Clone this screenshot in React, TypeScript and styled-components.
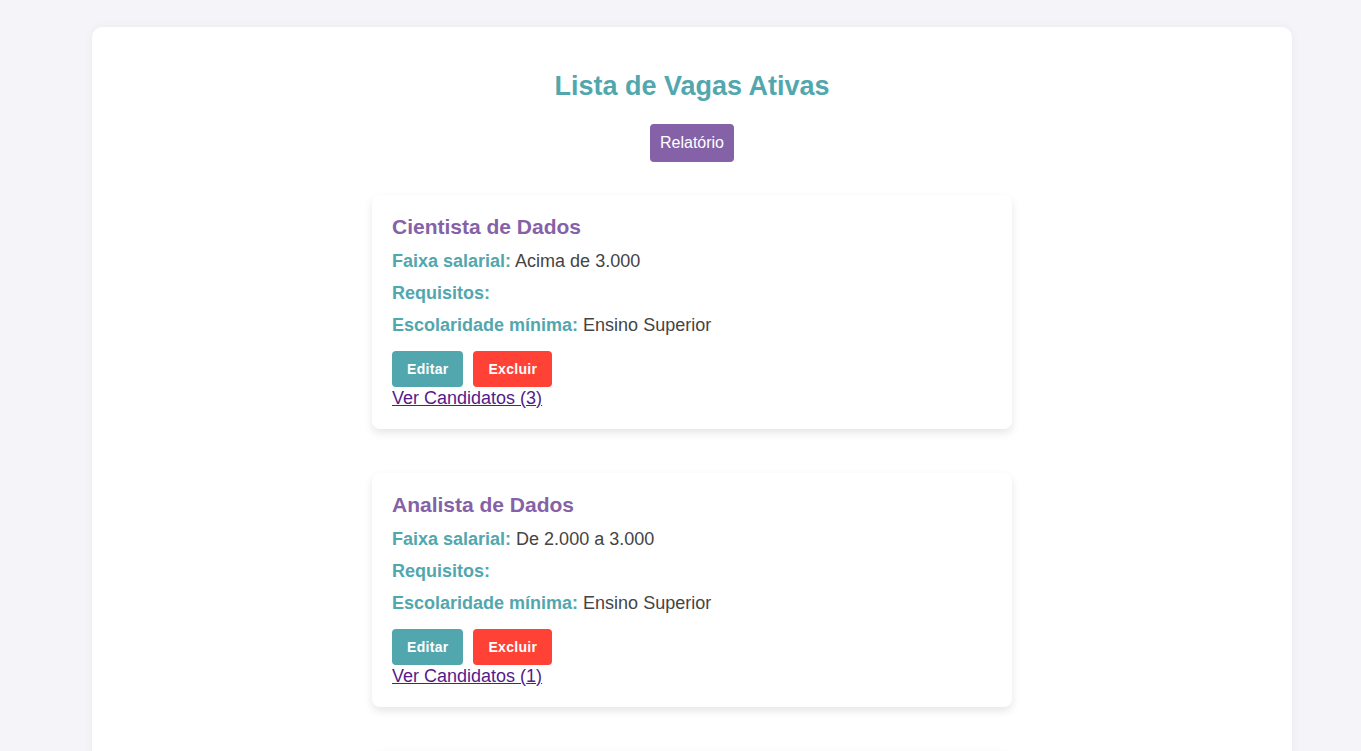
import React from "react";
import styled, { createGlobalStyle } from "styled-components";

const Global = createGlobalStyle`
  html, body { margin: 0; padding: 0; }
  body {
    background: #f4f4f9;
    font-family: "Liberation Sans", Arial, sans-serif;
  }
`;

const Page = styled.div`
  padding: 27px 69px 0 92px;
`;

const Container = styled.main`
  width: 1200px;
  background: #ffffff;
  border-radius: 10px;
  box-shadow: 0 0 10px rgba(0, 0, 0, 0.05);
  padding: 43px 0 40px;
  display: flex;
  flex-direction: column;
  align-items: center;
  box-sizing: border-box;
`;

const Title = styled.h1`
  margin: 0;
  font-size: 27px;
  line-height: 32px;
  font-weight: 700;
  color: #52a7ae;
`;

const ReportButton = styled.button`
  margin-top: 22px;
  height: 38px;
  padding: 0 10px;
  background: #8562a7;
  color: #ffffff;
  border: none;
  border-radius: 4px;
  font-family: "Liberation Sans", Arial, sans-serif;
  font-size: 16px;
  cursor: pointer;
`;

const List = styled.div`
  margin-top: 33px;
  display: flex;
  flex-direction: column;
  gap: 44px;
`;

const Card = styled.section`
  width: 640px;
  box-sizing: border-box;
  padding: 20px 20px 22px;
  background: #ffffff;
  border-radius: 8px;
  box-shadow: 0 4px 8px rgba(0, 0, 0, 0.1);
  display: flex;
  flex-direction: column;
  align-items: flex-start;
`;

const CardTitle = styled.h3`
  margin: 0 0 10px;
  font-size: 21px;
  line-height: 24px;
  font-weight: 700;
  color: #8562a7;
`;

const Field = styled.p`
  margin: 0 0 8px;
  font-size: 18px;
  line-height: 24px;
  color: #444444;
`;

const Label = styled.strong`
  color: #52a7ae;
  font-weight: 700;
`;

const Actions = styled.div`
  margin-top: 6px;
  display: flex;
  gap: 10px;
`;

const ActionButton = styled.button<{ $variant: "edit" | "delete" }>`
  height: 36px;
  padding: 0 15px;
  border: none;
  border-radius: 4px;
  background: ${(p) => (p.$variant === "edit" ? "#52a7ae" : "#ff4136")};
  color: #ffffff;
  font-family: "Liberation Sans", Arial, sans-serif;
  font-size: 14px;
  font-weight: 700;
  letter-spacing: 0.3px;
  cursor: pointer;
`;

const CandidatesLink = styled.a`
  margin-top: 2px;
  font-size: 18px;
  line-height: 18px;
  color: #551a8b;
  text-decoration: underline;
`;

const vagas = [
  {
    titulo: "Cientista de Dados",
    faixa: "Acima de 3.000",
    escolaridade: "Ensino Superior",
    candidatos: 3,
  },
  {
    titulo: "Analista de Dados",
    faixa: "De 2.000 a 3.000",
    escolaridade: "Ensino Superior",
    candidatos: 1,
  },
  {
    titulo: "Engenheiro de Dados",
    faixa: "Acima de 3.000",
    escolaridade: "Ensino Superior",
    candidatos: 2,
  },
];

export default function App() {
  return (
    <>
      <Global />
      <Page>
        <Container>
          <Title>Lista de Vagas Ativas</Title>
          <ReportButton>Relatório</ReportButton>
          <List>
            {vagas.map((v) => (
              <Card key={v.titulo}>
                <CardTitle>{v.titulo}</CardTitle>
                <Field>
                  <Label>Faixa salarial:</Label> {v.faixa}
                </Field>
                <Field>
                  <Label>Requisitos:</Label>
                </Field>
                <Field>
                  <Label>Escolaridade mínima:</Label> {v.escolaridade}
                </Field>
                <Actions>
                  <ActionButton $variant="edit">Editar</ActionButton>
                  <ActionButton $variant="delete">Excluir</ActionButton>
                </Actions>
                <CandidatesLink href="#">
                  Ver Candidatos ({v.candidatos})
                </CandidatesLink>
              </Card>
            ))}
          </List>
        </Container>
      </Page>
    </>
  );
}
